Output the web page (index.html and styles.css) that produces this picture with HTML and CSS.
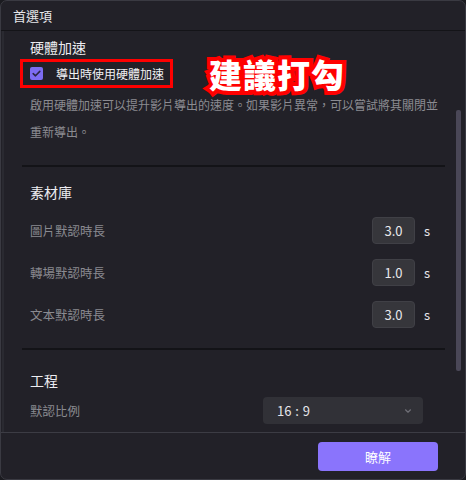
FILE: index.html
```html
<!DOCTYPE html>
<html lang="zh-Hant">
<head>
<meta charset="utf-8">
<title>首選項</title>
<link rel="stylesheet" href="styles.css">
</head>
<body>
<div class="window">
  <div class="titlebar">首選項</div>
  <div class="content">
    <div class="main">
      <section class="section section-first">
        <h2 class="heading">硬體加速</h2>
        <div class="hint-row">
          <label class="check-box">
            <span class="checkbox">
              <svg width="13" height="13" viewBox="0 0 13 13"><path d="M3.2 6.6 L5.5 8.8 L9.8 4.4" fill="none" stroke="#2b2545" stroke-width="1.6" stroke-linecap="round" stroke-linejoin="round"/></svg>
            </span>
            <span class="check-label">導出時使用硬體加速</span>
          </label>
          <span class="annotation">建議打勾</span>
        </div>
        <p class="desc">啟用硬體加速可以提升影片導出的速度。如果影片異常，可以嘗試將其關閉並重新導出。</p>
      </section>
      <div class="divider"></div>
      <section class="section section-lib">
        <h2 class="heading">素材庫</h2>
        <div class="rows">
          <div class="row"><span class="label">圖片默認時長</span><span class="num">3.0</span><span class="unit">s</span></div>
          <div class="row"><span class="label">轉場默認時長</span><span class="num">1.0</span><span class="unit">s</span></div>
          <div class="row"><span class="label">文本默認時長</span><span class="num">3.0</span><span class="unit">s</span></div>
        </div>
      </section>
      <div class="divider"></div>
      <section class="section section-proj">
        <h2 class="heading">工程</h2>
        <div class="row row-select">
          <span class="label">默認比例</span>
          <div class="select">
            <span>16 : 9</span>
            <svg width="10" height="10" viewBox="0 0 10 10"><path d="M2.5 3.8 L5 6.2 L7.5 3.8" fill="none" stroke="#6e6e76" stroke-width="1.2" stroke-linecap="round" stroke-linejoin="round"/></svg>
          </div>
        </div>
      </section>
    </div>
    <div class="scroll-track"><div class="scroll-thumb"></div></div>
  </div>
  <div class="footer">
    <button class="btn">瞭解</button>
  </div>
</div>
</body>
</html>
```
FILE: styles.css
```css
* { box-sizing: border-box; }
html, body {
  margin: 0;
  padding: 0;
  background: #1b1b20;
}
body {
  font-family: "Noto Sans CJK TC", "Noto Sans", sans-serif;
  width: 466px;
  height: 480px;
  overflow: hidden;
}
.window {
  width: 466px;
  height: 480px;
  background: #222128;
  border: 1px solid #3a3a42;
  border-radius: 7px;
  display: flex;
  flex-direction: column;
  overflow: hidden;
}
.titlebar {
  height: 30px;
  flex: none;
  padding-left: 12px;
  font-size: 13px;
  line-height: 29px;
  color: #e6e6ea;
  border-bottom: 1px solid #141418;
}
.content {
  flex: 1;
  display: flex;
  min-height: 0;
  border-left: 2px solid #2a2a31;
  margin-left: 1px;
}
.main {
  width: 442px;
  padding-left: 18px;
  overflow: hidden;
}
.scroll-track {
  width: 19px;
  flex: none;
  padding-left: 10px;
}
.scroll-thumb {
  width: 5px;
  height: 261px;
  margin-top: 79px;
  background: #4a4757;
  border-radius: 2px;
}
.section {
  padding-left: 8px;
}
.section-first { padding-top: 7px; }
.section-lib { padding-top: 16px; }
.section-proj { padding-top: 21px; }
.heading {
  margin: 0;
  font-size: 14px;
  font-weight: 400;
  line-height: 18px;
  color: #ececf0;
}
.hint-row {
  display: flex;
  align-items: center;
  margin-top: 3px;
  height: 29px;
}
.check-box {
  display: flex;
  align-items: center;
  flex: none;
  margin-left: -10px;
  height: 29px;
  border: 3px solid #ff0000;
  padding-left: 7px;
  padding-right: 6px;
  white-space: nowrap;
}
.checkbox {
  width: 13px;
  height: 13px;
  border-radius: 2px;
  background: #7d6cf2;
  display: flex;
}
.check-label {
  margin-left: 13px;
  font-size: 12px;
  color: #f0f0f2;
  line-height: 18px;
}
.annotation {
  margin-left: 36px;
  font-size: 33px;
  font-weight: 900;
  line-height: 38px;
  color: #ffffff;
  -webkit-text-stroke: 8px #ff0000;
  paint-order: stroke fill;
  letter-spacing: 1px;
  white-space: nowrap;
}
.desc {
  margin: 3px 0 0 0;
  font-size: 12px;
  line-height: 27px;
  color: #8b8b91;
  padding-right: 4px;
}
.divider {
  height: 2px;
  background: #131317;
  margin-top: 20px;
  width: 423px;
}
.rows {
  display: flex;
  flex-direction: column;
  gap: 15px;
  margin-top: 16px;
}
.row {
  display: flex;
  align-items: center;
  height: 27px;
}
.label {
  flex: 1;
  font-size: 12.5px;
  color: #8a8a90;
}
.num {
  width: 43px;
  height: 27px;
  background: #36363b;
  border: 1px solid #404046;
  border-radius: 4px;
  color: #e8e8ec;
  font-size: 13px;
  line-height: 25px;
  text-align: center;
}
.unit {
  width: 31px;
  padding-left: 9px;
  font-size: 13px;
  color: #e8e8ec;
}
.row-select { margin-top: 8px; }
.select {
  width: 160px;
  height: 27px;
  margin-right: 23px;
  background: #313137;
  border-radius: 4px;
  display: flex;
  align-items: center;
  justify-content: space-between;
  padding: 0 10px 0 14px;
  font-size: 13px;
  color: #e6e6ea;
  word-spacing: 1px;
}
.footer {
  flex: none;
  height: 47px;
  border-top: 1px solid #3c3c44;
  display: flex;
  justify-content: flex-end;
  align-items: flex-start;
  padding-top: 9px;
  padding-right: 27px;
}
.btn {
  width: 120px;
  height: 29px;
  background: #8a74fc;
  border: none;
  border-radius: 4px;
  color: #ffffff;
  font-family: "Noto Sans CJK TC", "Noto Sans", sans-serif;
  font-size: 13px;
}
```
